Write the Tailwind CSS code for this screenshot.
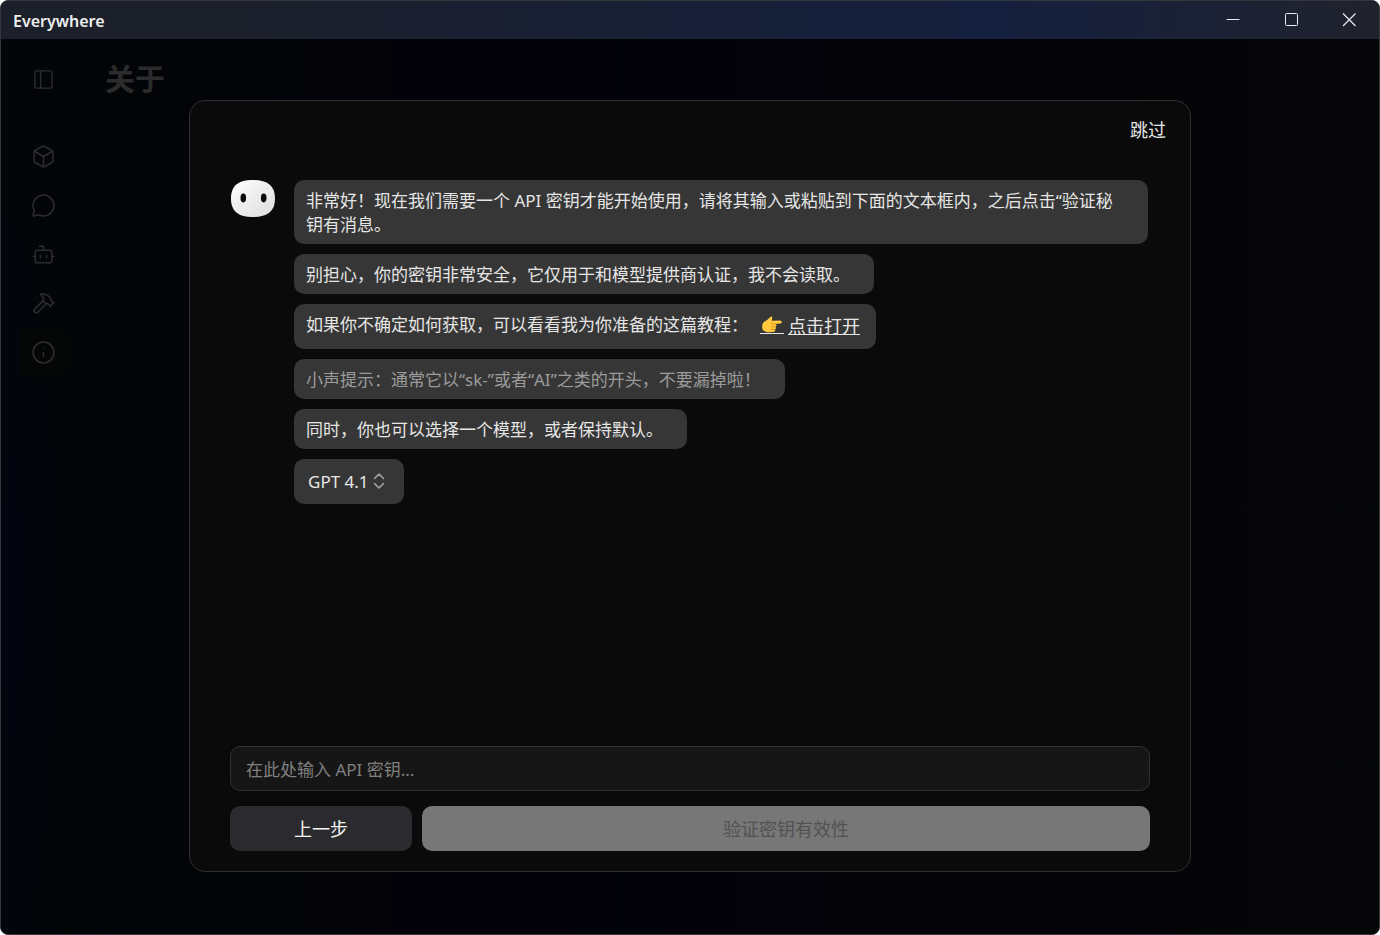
<!DOCTYPE html>
<html lang="zh-CN">
<head>
    <meta charset="UTF-8">
    <meta name="viewport" content="width=device-width, initial-scale=1.0">
    <title>Everywhere</title>
    <script src="https://cdn.jsdelivr.net/npm/@tailwindcss/browser@4"></script>
</head>
<body class="bg-white font-['Noto_Sans','Noto_Sans_CJK_SC',sans-serif] text-[17px] leading-6 text-[#e6e6e6]">
    <div class="flex h-screen flex-col overflow-hidden rounded-lg border border-[#34373b] bg-[#040507]">
        <!-- Title bar -->
        <header class="flex h-[38px] shrink-0 items-center justify-between bg-linear-to-r from-[#1c202b] from-15% via-[#15203f] via-72% to-[#20222d] pr-px pl-3">
            <h1 class="pt-px text-base font-semibold text-[#eeeeee]">Everywhere</h1>
            <div class="flex h-full">
                <button type="button" aria-label="最小化" class="flex w-[58px] items-center justify-center">
                    <svg class="size-[14px]" viewBox="0 0 14 14" fill="none" stroke="#e8ecf4"><path d="M0.5 6.5h13"/></svg>
                </button>
                <button type="button" aria-label="最大化" class="flex w-[58px] items-center justify-center">
                    <svg class="size-[14px]" viewBox="0 0 14 14" fill="none" stroke="#e8ecf4"><rect x="1.5" y="0.5" width="12" height="12" rx="1"/></svg>
                </button>
                <button type="button" aria-label="关闭" class="flex w-[58px] items-center justify-center">
                    <svg class="size-[14px]" viewBox="0 0 14 14" fill="none" stroke="#e8ecf4" stroke-width="1.2"><path d="M1 0.5l12.5 12.5M13.5 0.5L1 13"/></svg>
                </button>
            </div>
        </header>

        <div class="relative flex min-h-0 flex-1 bg-linear-to-r from-[#030507] via-[#020209] via-45% to-[#050607]">
            <!-- Sidebar -->
            <nav class="flex w-[84px] shrink-0 flex-col items-center bg-[radial-gradient(ellipse_at_0%_62%,#020510,transparent_70%)] pt-4 text-[#2b2c2e]">
                <button type="button" aria-label="折叠侧栏" class="flex size-[49px] items-center justify-center">
                    <svg class="size-[23px]" viewBox="0 0 24 24" fill="none" stroke="currentColor" stroke-width="1.5" stroke-linecap="round" stroke-linejoin="round"><rect x="3" y="3" width="18" height="18" rx="2"/><path d="M9 3v18"/></svg>
                </button>
                <div class="mt-7 flex flex-col">
                    <a href="#" aria-label="模型" class="flex size-[49px] items-center justify-center">
                        <svg class="size-[25px]" viewBox="0 0 24 24" fill="none" stroke="currentColor" stroke-width="1.5" stroke-linecap="round" stroke-linejoin="round"><path d="M21 8a2 2 0 0 0-1-1.73l-7-4a2 2 0 0 0-2 0l-7 4A2 2 0 0 0 3 8v8a2 2 0 0 0 1 1.73l7 4a2 2 0 0 0 2 0l7-4A2 2 0 0 0 21 16Z"/><path d="m3.3 7 8.7 5 8.7-5"/><path d="M12 22V12"/></svg>
                    </a>
                    <a href="#" aria-label="聊天" class="flex size-[49px] items-center justify-center">
                        <svg class="size-[25px]" viewBox="0 0 24 24" fill="none" stroke="currentColor" stroke-width="1.5" stroke-linecap="round" stroke-linejoin="round"><path d="M2.992 16.342a2 2 0 0 1 .094 1.167l-1.065 3.29a1 1 0 0 0 1.236 1.168l3.413-.998a2 2 0 0 1 1.099.092 10 10 0 1 0-4.777-4.719"/></svg>
                    </a>
                    <a href="#" aria-label="助手" class="flex size-[49px] items-center justify-center">
                        <svg class="size-[25px]" viewBox="0 0 24 24" fill="none" stroke="currentColor" stroke-width="1.5" stroke-linecap="round" stroke-linejoin="round"><path d="M12 8V4H8"/><rect x="4" y="8" width="16" height="12" rx="2"/><path d="M2 14h2M20 14h2M15 13v2M9 13v2"/></svg>
                    </a>
                    <a href="#" aria-label="工具" class="flex size-[49px] items-center justify-center">
                        <svg class="size-[25px]" viewBox="0 0 24 24" fill="none" stroke="currentColor" stroke-width="1.5" stroke-linecap="round" stroke-linejoin="round"><path d="m15 12-8.373 8.373a1 1 0 1 1-3-3L12 9"/><path d="m18 15 4-4"/><path d="m21.5 11.5-1.914-1.914A2 2 0 0 1 19 8.172V7l-2.26-2.26a6 6 0 0 0-4.202-1.756L9 2.96l.92.82A6.18 6.18 0 0 1 12 8.4V10l2 2h1.172a2 2 0 0 1 1.414.586L18.5 14.5"/></svg>
                    </a>
                    <a href="#" aria-label="关于" class="flex size-[49px] items-center justify-center rounded-lg bg-[#050606]">
                        <svg class="size-[25px]" viewBox="0 0 24 24" fill="none" stroke="currentColor" stroke-width="1.5" stroke-linecap="round" stroke-linejoin="round"><circle cx="12" cy="12" r="10"/><path d="M12 16v-4M12 8h.01"/></svg>
                    </a>
                </div>
            </nav>

            <h2 class="px-5 pt-5 text-[30px] leading-10 font-bold text-[#2b2b2b]">关于</h2>

            <!-- Setup dialog -->
            <div class="absolute inset-0 px-6 pt-[61px] pb-[62px]">
                <section role="dialog" aria-label="设置向导" class="mx-auto flex h-full max-w-[1002px] flex-col rounded-2xl border border-[#2f2f2f] bg-[#0a0a0a] px-10 pb-5">
                    <div class="-mr-4 flex h-[79px] shrink-0 justify-end pt-[17px]">
                        <button type="button" class="h-6 text-[18px]">跳过</button>
                    </div>

                    <div class="flex min-h-0 flex-1 gap-[19px] pr-[2px]">
                        <svg class="h-[38px] w-[45px] shrink-0" viewBox="-1 0 45 38">
                            <defs>
                                <linearGradient id="face" x1="0" y1="0" x2="1" y2="1">
                                    <stop offset="0" stop-color="#ffffff"/>
                                    <stop offset="0.35" stop-color="#f2f2f2"/>
                                    <stop offset="1" stop-color="#dedede"/>
                                </linearGradient>
                            </defs>
                            <path d="M22 0C36 0 44 5 44 18.500S36 37 22 37 0 32 0 18.500 8 0 22 0Z" fill="url(#face)"/>
                            <ellipse cx="12.3" cy="18" rx="2.8" ry="4.4" fill="#0a0a0a"/>
                            <ellipse cx="32.7" cy="18" rx="2.8" ry="4.4" fill="#0a0a0a"/>
                        </svg>

                        <div class="flex flex-1 flex-col items-start gap-[10px]">
                            <p class="rounded-[10px] bg-[#363636] pt-[9px] pr-6 pb-[7px] pl-3">非常好！现在我们需要一个 API 密钥才能开始使用，请将其输入或粘贴到下面的文本框内，之后点击“验证秘钥有消息。</p>
                            <p class="rounded-[10px] bg-[#363636] pt-[9px] pr-6 pb-[7px] pl-3">别担心，你的密钥非常安全，它仅用于和模型提供商认证，我不会读取。</p>
                            <p class="flex h-[45px] rounded-[10px] bg-[#363636] pt-[9px] pr-4 pl-3">
                                如果你不确定如何获取，可以看看我为你准备的这篇教程：
                                <a href="#" class="ml-3 flex h-[25px] items-end gap-1">
                                    <span class="mb-1 flex border-b border-[#e6e6e6] px-[2px]">
                                        <svg class="h-[17px] w-5" viewBox="0 0 20 17">
                                            <path d="M1 7C2.5 5 5 4.5 7 2.3 8 .9 9 0 9.800.6c.9.7.5 2.2-.2 4.200L18 4.400c2.300 0 2.400 3 .1 3.200l-4.900.4c1.600.4 1.600 2.500.2 2.800 1 .7.8 2.300-.5 2.600.8 1-.1 2.400-1.400 2.400-1.600.5-5.300.8-7.300.1L1 14.200C-.3 12 0 9 1 7Z" fill="#ffc83d"/>
                                            <path d="M9.500 7.900h3.700M9.500 10.800h3.700M9.300 13.400h3.200" stroke="#d98b16" stroke-width="0.8" stroke-linecap="round"/>
                                        </svg>
                                    </span>
                                    <span class="text-[18px] leading-6 underline underline-offset-1">点击打开</span>
                                </a>
                            </p>
                            <p class="rounded-[10px] bg-[#363636] pt-[9px] pr-6 pb-[7px] pl-3 text-[#9b9b9b]">小声提示：通常它以“sk-”或者“AI”之类的开头，不要漏掉啦！</p>
                            <p class="rounded-[10px] bg-[#363636] pt-[9px] pr-6 pb-[7px] pl-3">同时，你也可以选择一个模型，或者保持默认。</p>
                            <div class="relative">
                                <select aria-label="模型" class="block h-[45px] w-[110px] appearance-none rounded-[10px] bg-[#363636] pl-[14px]">
                                    <option>GPT 4.1</option>
                                </select>
                                <svg class="pointer-events-none absolute top-[14px] right-[19px] h-4 w-3" viewBox="0 0 12 16" fill="none" stroke="#a3a3a3" stroke-width="1.6" stroke-linecap="round" stroke-linejoin="round"><path d="M1.500 5.500 6 1l4.500 4.500M1.500 10.500 6 15l4.500-4.500"/></svg>
                            </div>
                        </div>
                    </div>

                    <form class="flex shrink-0 flex-col gap-[15px]">
                        <input type="text" aria-label="API 密钥" placeholder="在此处输入 API 密钥..." class="h-[45px] w-full rounded-[10px] border border-[#303030] bg-[#161616] px-[15px] pt-px placeholder:text-[#808080]">
                        <div class="flex gap-[10px]">
                            <button type="button" class="h-[45px] flex-1 rounded-[10px] bg-[#2b2b2f] text-[18px] text-[#f5f5f5]">上一步</button>
                            <button type="submit" disabled class="h-[45px] flex-4 rounded-[10px] bg-[#777777] text-[18px] text-[#525252]">验证密钥有效性</button>
                        </div>
                    </form>
                </section>
            </div>
        </div>
    </div>
</body>
</html>
